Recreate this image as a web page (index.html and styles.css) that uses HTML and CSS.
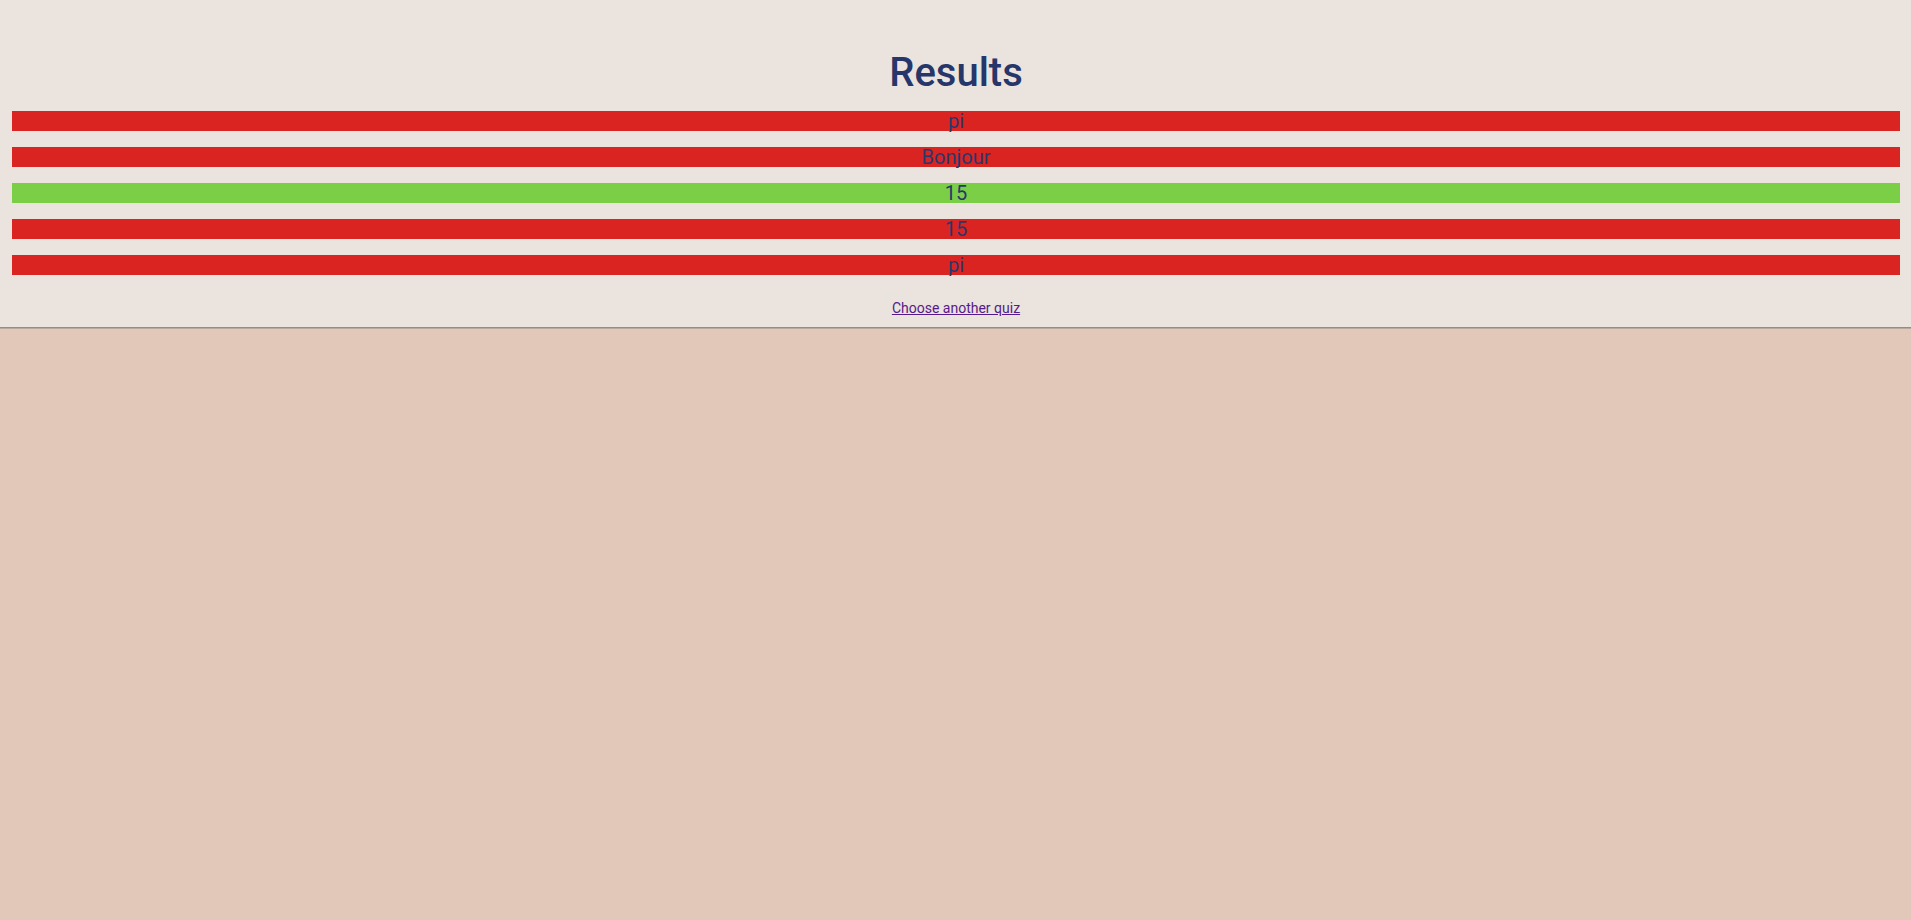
FILE: index.html
```html
<!DOCTYPE html>
<html lang="en">
<head>
<meta charset="utf-8">
<title>Results</title>
<link rel="stylesheet" href="styles.css">
</head>
<body>
<header class="results">
  <h1 class="results__title">Results</h1>
  <ul class="results__list">
    <li class="answer answer--wrong">pi</li>
    <li class="answer answer--wrong">Bonjour</li>
    <li class="answer answer--right">15</li>
    <li class="answer answer--wrong">15</li>
    <li class="answer answer--wrong">pi</li>
  </ul>
  <div class="results__footer"><a class="results__link" href="#">Choose another quiz</a></div>
</header>
</body>
</html>
```

FILE: styles.css
```css
html, body {
  margin: 0;
  padding: 0;
}
body {
  background: #e2c8b8;
  font-family: Roboto, "Liberation Sans", sans-serif;
  min-height: 920px;
}
.results {
  background: #ebe3de;
  padding: 49px 11px 11px 12px;
  border-bottom: 1px solid #978c84;
  box-shadow: 0 1px 0 #b9a89c;
}
.results__title {
  margin: 0;
  text-align: center;
  font-size: 40px;
  font-weight: 500;
  line-height: 47px;
  color: #26366a;
}
.results__list {
  list-style: none;
  margin: 15px 0 0;
  padding: 0;
  display: flex;
  flex-direction: column;
  gap: 16px;
}
.answer {
  height: 20px;
  line-height: 20px;
  font-size: 20px;
  text-align: center;
  color: #29386b;
}
.answer--wrong {
  background: #d92422;
}
.answer--right {
  background: #7bcf46;
}
.results__footer {
  margin-top: 25px;
  text-align: center;
  line-height: 16px;
}
.results__link {
  font-size: 14px;
  color: #551a8b;
  text-decoration: underline;
}
```
